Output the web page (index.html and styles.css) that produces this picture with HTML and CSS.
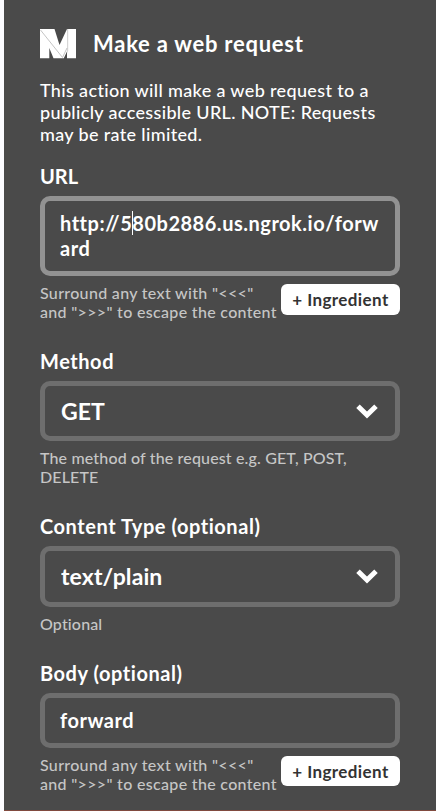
FILE: index.html
```html
<!DOCTYPE html>
<html lang="en">
<head>
    <meta charset="UTF-8">
    <meta name="viewport" content="width=device-width, initial-scale=1.0">
    <title>Make a web request</title>
    <link rel="stylesheet" href="styles.css">
</head>
<body>
  <main class="action">
    <header class="action-header">
      <svg class="logo" width="36" height="30" viewBox="0 0 36 30">
        <path fill="#fff" d="M0 0H14.5L19.5 16L27 0H36V29.3H27V22.5L23.8 29.3H13.5L9.3 19V29.3H0Z"/>
        <path fill="#d6d6d6" d="M27 0H28.2V22L27 24.5Z"/>
        <path fill="none" stroke="#bdbdbd" stroke-width="0.9" d="M0.5 1L22.5 28.5L27 19"/>
      </svg>
      <h1>Make a web request</h1>
    </header>
    <p class="description">This action will make a web request to a<br>publicly accessible URL. NOTE: Requests<br>may be rate limited.</p>

    <form>
      <div class="field field-url">
        <label for="url">URL</label>
        <div class="input-wrap">
          <textarea id="url" class="input focused" rows="2" spellcheck="false">http://580b2886.us.ngrok.io/forward</textarea>
          <span class="caret"></span>
        </div>
        <div class="help-row">
          <p class="help">Surround any text with "&lt;&lt;&lt;"<br>and "&gt;&gt;&gt;" to escape the content</p>
          <button type="button" class="btn">+ Ingredient</button>
        </div>
      </div>

      <div class="field field-method">
        <label for="method">Method</label>
        <div class="input-wrap">
          <select id="method" class="input select">
            <option>GET</option>
          </select>
          <svg class="chevron" width="22" height="15" viewBox="0 0 22 15"><path d="M2 2.2L11 11L20 2.2"/></svg>
        </div>
        <p class="help">The method of the request e.g. GET, POST,<br>DELETE</p>
      </div>

      <div class="field field-type">
        <label for="type">Content Type (optional)</label>
        <div class="input-wrap">
          <select id="type" class="input select">
            <option>text/plain</option>
          </select>
          <svg class="chevron" width="22" height="15" viewBox="0 0 22 15"><path d="M2 2.2L11 11L20 2.2"/></svg>
        </div>
        <p class="help">Optional</p>
      </div>

      <div class="field field-body">
        <label for="body">Body (optional)</label>
        <textarea id="body" class="input" rows="1" spellcheck="false">forward</textarea>
        <div class="help-row">
          <p class="help">Surround any text with "&lt;&lt;&lt;"<br>and "&gt;&gt;&gt;" to escape the content</p>
          <button type="button" class="btn">+ Ingredient</button>
        </div>
      </div>
    </form>
  </main>
</body>
</html>
```
FILE: styles.css
```css
*{
  margin: 0;
  padding: 0;
  box-sizing: border-box;
}

body{
  background: #fcfcff;
  color: #fff;
  font-family: Lato, "Open Sans", sans-serif;
  overflow: hidden;
}

.action{
  height: 811px;
  margin-left: 4px;
  padding: 29px 36px 0;
  background: #4a4a4a;
  border-bottom: 1px solid #804a3f;
}

.action-header{
  display: flex;
  align-items: center;
  column-gap: 17px;
  height: 30px;
}

h1{
  font-size: 22px;
  font-weight: 700;
  line-height: 30px;
  white-space: nowrap;
  letter-spacing: 0.75px;
}

.description{
  margin-top: 20px;
  font-size: 18px;
  font-weight: 500;
  line-height: 22px;
  white-space: nowrap;
  letter-spacing: 0.35px;
}

.field label{
  display: block;
  height: 30px;
  font-size: 20px;
  font-weight: 700;
  line-height: 20px;
  letter-spacing: 0.55px;
}

.field-url{
  height: 185px;
  margin-top: 21px;
}

.field-url label{
  letter-spacing: 0;
}

.field-method{
  height: 165px;
}

.field-type{
  height: 147px;
}

.input-wrap{
  position: relative;
}

.input{
  display: block;
  width: 360px;
  padding: 10px 10px 10px 15px;
  border: 5px solid #6e6e6e;
  border-radius: 10px;
  outline: none;
  background: transparent;
  color: #fff;
  font-family: inherit;
  font-size: 20px;
  font-weight: 700;
  line-height: 25px;
  letter-spacing: 0.52px;
  word-break: break-all;
  resize: none;
  overflow: hidden;
}

.focused{
  border-color: #929292;
}

.select{
  height: 60px;
  padding: 0 16px;
  font-size: 23px;
  letter-spacing: 0.1px;
  appearance: none;
}

.field-type .select{
  height: 61px;
}

.caret{
  position: absolute;
  top: 15px;
  left: 92px;
  width: 1px;
  height: 24px;
  background: #fff;
}

.chevron{
  position: absolute;
  top: 23px;
  right: 22px;
}

.chevron path{
  fill: none;
  stroke: #fff;
  stroke-width: 5;
}

.help-row{
  display: flex;
  justify-content: space-between;
  align-items: flex-start;
}

.help{
  margin-top: 7px;
  color: #c6c6c6;
  font-size: 16px;
  font-weight: 500;
  line-height: 19px;
  white-space: nowrap;
  letter-spacing: 0.15px;
}

.help-row .help{
  letter-spacing: 0.32px;
}

.btn{
  flex: none;
  width: 119px;
  height: 31px;
  margin-top: 8px;
  border: none;
  border-radius: 6px;
  background: #fff;
  color: #333;
  font-family: inherit;
  font-size: 17px;
  font-weight: 700;
  white-space: nowrap;
  letter-spacing: 0.4px;
}

.field-body .btn{
  height: 30px;
}
```
